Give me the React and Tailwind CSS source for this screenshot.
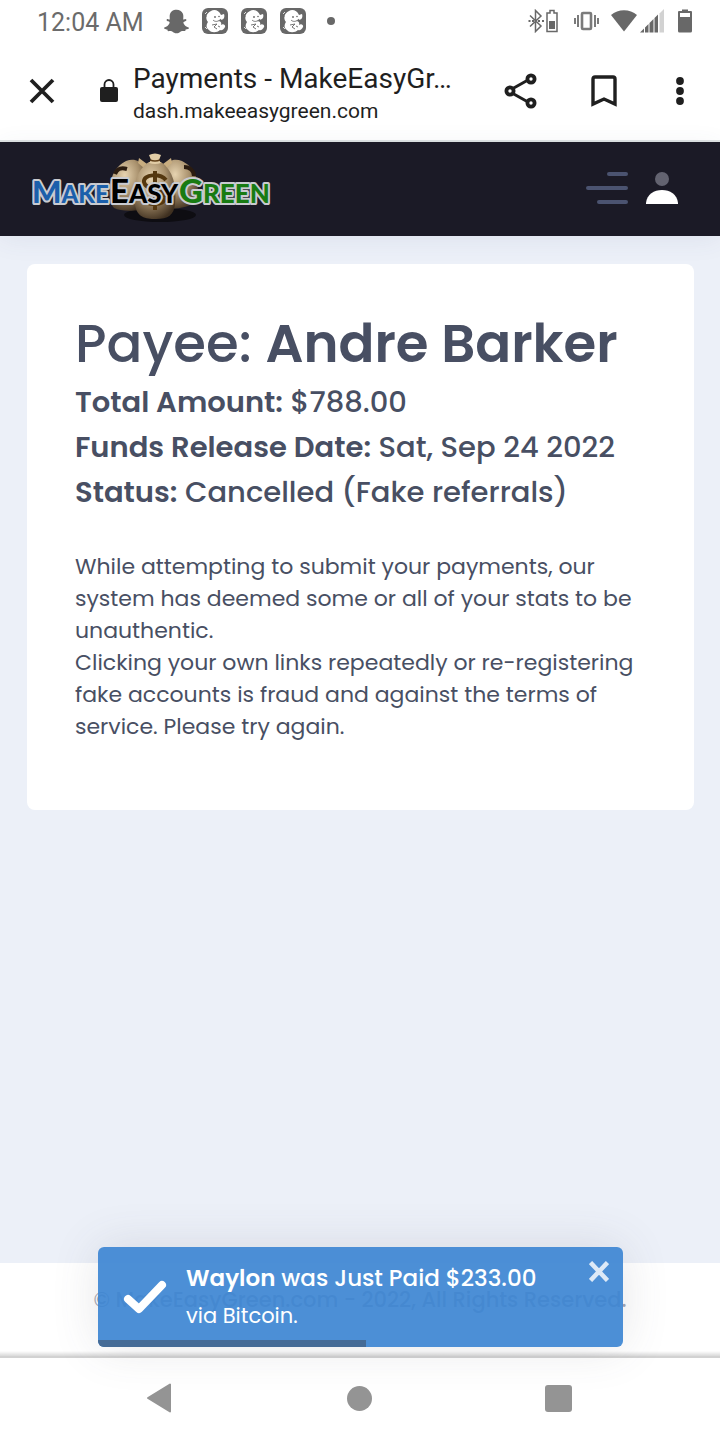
import { FaSnapchatGhost } from 'react-icons/fa'

const StickerIcon = () => (
  <svg width="26" height="26" viewBox="0 0 26 26" aria-hidden="true">
    <rect width="26" height="26" rx="6" fill="#686868" />
    <path
      d="M9 3c3-2 8-1 10 4l3-1c1 3 0 6-4 6l-2 1c2 0 4 1 3 4 2-2 5 0 4 2s-3 4-5 3c-3 3-9 3-11 0-3-2-3-5-1-8-3-3-2-9 3-11z"
      fill="#fff"
    />
    <path
      d="M4 8l-1 3M5 14l-2 2M11 12c2 2 5 2 8-1M10 17l5-1-3 3 3 2M16 18l2 1"
      fill="none"
      stroke="#686868"
      strokeWidth="0.9"
    />
    <circle cx="13" cy="9" r="0.9" fill="#686868" />
    <circle cx="17" cy="8.500" r="0.8" fill="#686868" />
    <path d="M3 6l2-2M3 19l2 2" stroke="#fff" strokeWidth="0.8" />
  </svg>
)

const BluetoothBatteryIcon = () => (
  <svg width="30" height="24" viewBox="0 0 30 24" fill="none" stroke="#686868" aria-hidden="true">
    <path d="M2 6.500l11 10.500-5.500 5.500V1.500L13 7 2 17.500" strokeWidth="1.500" />
    <path d="M0.500 12h2M4 12h2M10 12h2M14 12h2" strokeWidth="1.800" />
    <path d="M19 4h3V1.500h4V4h3v18.500H19z" strokeWidth="1.500" />
    <path d="M21 12h6v8h-6z" fill="#686868" stroke="none" />
  </svg>
)

const VibrateIcon = () => (
  <svg width="25" height="20" viewBox="0 0 25 20" fill="none" stroke="#7b7b7b" aria-hidden="true">
    <rect x="8" y="2" width="9" height="16" rx="1" strokeWidth="2.600" />
    <path d="M1 7v6M4 4v12M21 4v12M24 7v6" strokeWidth="2" />
  </svg>
)

const WifiIcon = () => (
  <svg width="26" height="22" viewBox="0 0 26 22" aria-hidden="true">
    <path d="M0 5C7-1.500 19-1.500 26 5L13 21.500z" fill="#686868" />
  </svg>
)

const SignalIcon = () => (
  <svg width="24" height="24" viewBox="0 0 24 24" fill="#686868" aria-hidden="true">
    <path d="M0 23.500L4 19.500v4zM5 18.500l3.500-3.500v8.500H5zM9.500 14l4-4v13.500h-4zM14.500 9L18 5.500v18h-3.500z" />
    <path d="M19.500 4.500L24 0v23.500h-4.500z" fill="#d2d2d2" />
  </svg>
)

const BatteryIcon = () => (
  <svg width="14" height="24" viewBox="0 0 14 24" aria-hidden="true">
    <path d="M4 2V.5h6V2h3q1 0 1 1v19q0 1.500-1.500 1.500h-11Q0 23.500 0 22V3q0-1 1-1z" fill="#686868" />
    <path d="M2 4h10v4H2z" fill="#fff" />
  </svg>
)

const CloseIcon = () => (
  <svg width="26" height="26" viewBox="0 0 26 26" stroke="#1f1f1f" strokeWidth="3.800" aria-hidden="true">
    <path d="M2 2l22 22M24 2L2 24" />
  </svg>
)

const LockIcon = () => (
  <svg width="18" height="24" viewBox="0 0 18 24" aria-hidden="true">
    <rect y="8" width="18" height="15" rx="2" fill="#1f1f1f" />
    <path d="M4.500 9V5.500a4.500 4.500 0 019 0V9" fill="none" stroke="#1f1f1f" strokeWidth="1.800" />
  </svg>
)

const ShareIcon = () => (
  <svg width="34" height="36" viewBox="0 0 34 36" fill="none" stroke="#1f1f1f" strokeWidth="3.800" aria-hidden="true">
    <path d="M8 16l16-9M8 20l16 9" strokeWidth="3" />
    <circle cx="6" cy="18" r="3.600" fill="#fff" />
    <circle cx="27" cy="6" r="3.600" fill="#fff" />
    <circle cx="27" cy="30" r="3.600" fill="#fff" />
  </svg>
)

const BookmarkIcon = () => (
  <svg width="26" height="32" viewBox="0 0 26 32" fill="none" stroke="#1f1f1f" strokeWidth="3.400" aria-hidden="true">
    <path d="M2 29V4q0-2 2-2h18q2 0 2 2v25l-11-5z" />
  </svg>
)

const MoreIcon = () => (
  <svg width="8" height="28" viewBox="0 0 8 28" fill="#1f1f1f" aria-hidden="true">
    <circle cx="4" cy="4" r="3.900" />
    <circle cx="4" cy="14" r="3.900" />
    <circle cx="4" cy="24" r="3.900" />
  </svg>
)

const StatusBar = () => (
  <div className="flex h-[42px] items-center justify-between pr-7 pl-[37px]">
    <div className="flex items-center">
      <span className="pt-1 text-[25px] leading-8 text-[#6b6b6b]">12:04 AM</span>
      <div className="ml-5 flex items-center gap-[13px]">
        <FaSnapchatGhost size={25} color="#686868" />
        <StickerIcon />
        <StickerIcon />
        <StickerIcon />
        <span className="ml-2 size-2 rounded-full bg-[#686868]" />
      </div>
    </div>
    <div className="flex items-center">
      <BluetoothBatteryIcon />
      <div className="ml-4 flex items-center">
        <VibrateIcon />
      </div>
      <div className="ml-3 flex items-center gap-[3px]">
        <WifiIcon />
        <SignalIcon />
      </div>
      <div className="ml-[14px]">
        <BatteryIcon />
      </div>
    </div>
  </div>
)

const BrowserBar = () => (
  <div className="flex h-[100px] items-center border-b-2 border-[#dfe3e3] pr-9 pl-[29px] text-[#1f1f1f]">
    <button type="button" aria-label="Close tab">
      <CloseIcon />
    </button>
    <div className="ml-[45px]">
      <LockIcon />
    </div>
    <div className="ml-[15px] min-w-0 flex-1 pt-2">
      <p className="text-[28px] leading-8 whitespace-nowrap">Payments - MakeEasyGr…</p>
      <p className="text-[21px] leading-8">dash.makeeasygreen.com</p>
    </div>
    <div className="flex items-center">
      <button type="button" aria-label="Share">
        <ShareIcon />
      </button>
      <button type="button" aria-label="Bookmark" className="ml-[53px]">
        <BookmarkIcon />
      </button>
      <button type="button" aria-label="More options" className="ml-[59px]">
        <MoreIcon />
      </button>
    </div>
  </div>
)

const Logo = () => (
  <svg width="242" height="76" viewBox="0 0 242 76" role="img" aria-label="MakeEasyGreen">
    <defs>
      <radialGradient id="bag" cx="0.4" cy="0.3" r="0.75">
        <stop offset="0" stopColor="#e6d3b0" />
        <stop offset="0.5" stopColor="#a8906c" />
        <stop offset="1" stopColor="#3f3020" />
      </radialGradient>
    </defs>
    <ellipse cx="128" cy="64" rx="36" ry="7" fill="#0e0d12" />
    <path d="M94 10c8-3 14 0 18 5l4 40c-8 6-26 6-34 2-8-8-7-38 12-47z" fill="url(#bag)" />
    <path d="M150 10c-8-3-14 0-18 5l-4 40c8 4 24 3 32-2 9-8 9-34-10-43z" fill="url(#bag)" />
    <path d="M107 7l8 6-3 4-6-5zM139 7l-8 6 3 4 6-5z" fill="#c8ad80" />
    <path d="M83 23c2-5 5-7 12-5M152 16c6 0 10 4 10 9" fill="none" stroke="#2b1c10" strokeWidth="4" />
    <path d="M117 11c-13 8-17 25-14 43 2 12 10 14 21 14 12 0 18-4 19-15 2-18-2-34-14-42z" fill="url(#bag)" />
    <path d="M117 4q6-3 12 0l-2 5 2 3q-6 2-12 0l2-3z" fill="#e2cda6" />
    <path d="M118 9q5 2 10 0" fill="none" stroke="#5d3d17" strokeWidth="1.500" />
    <path
      d="M134 29c-6-7-23-6-22 2 1 9 22 6 21 16-1 8-17 8-22 1M123 20v39"
      fill="none"
      stroke="#54370f"
      strokeWidth="4"
    />
    <g
      fontFamily="Lato, sans-serif"
      fontWeight="900"
      stroke="#c9cbd0"
      strokeWidth="4"
      strokeLinejoin="round"
      paintOrder="stroke"
    >
      <text x="0" y="52" fontSize="31" fill="#1b5fab">
        M<tspan fontSize="24">AKE</tspan>
      </text>
      <text x="147" y="52" fontSize="33" fill="#187b12">
        G<tspan fontSize="26">REEN</tspan>
      </text>
      <text x="78" y="52" fontSize="33" fill="#000">
        E<tspan fontSize="26">ASY</tspan>
      </text>
    </g>
  </svg>
)

const Header = () => (
  <header className="flex h-[94px] items-center justify-between bg-[#1b1a26] pr-[42px] pl-8 shadow-[0_4px_24px_rgba(70,80,110,0.08)]">
    <a href="/">
      <Logo />
    </a>
    <div className="flex items-center gap-[18px] pb-0.5">
      <button type="button" aria-label="Menu" className="flex w-[42px] flex-col items-end gap-[10px]">
        <span className="h-1 w-[21px] rounded-full bg-[#4b5370]" />
        <span className="h-1 w-[42px] rounded-full bg-[#4b5370]" />
        <span className="h-1 w-[31px] rounded-full bg-[#4b5370]" />
      </button>
      <button type="button" aria-label="Account">
        <svg width="32" height="32" viewBox="0 0 32 32" aria-hidden="true">
          <circle cx="16" cy="7" r="7" fill="#636370" />
          <path d="M0 32v-1c1-9 8-13 16-13s15 4 16 13v1z" fill="#fff" />
        </svg>
      </button>
    </div>
  </header>
)

const details = [
  { label: 'Total Amount:', value: '$788.00' },
  { label: 'Funds Release Date:', value: 'Sat, Sep 24 2022' },
  { label: 'Status:', value: 'Cancelled (Fake referrals)' },
]

const PaymentCard = () => (
  <section className="rounded-lg bg-white px-12 pt-12 pb-[67px] text-[#484f63]">
    <h1 className="mb-1 text-[53px] leading-[64px] font-medium whitespace-nowrap">
      Payee: <strong className="font-semibold">Andre Barker</strong>
    </h1>
    {details.map(({ label, value }) => (
      <p key={label} className="text-[29px] leading-[45px] font-medium whitespace-nowrap">
        <strong className="font-semibold">{label}</strong> {value}
      </p>
    ))}
    <p className="mt-9 text-[22px] leading-8 whitespace-nowrap">
      While attempting to submit your payments, our
      <br />
      system has deemed some or all of your stats to be
      <br />
      unauthentic.
      <br />
      Clicking your own links repeatedly or re-registering
      <br />
      fake accounts is fraud and against the terms of
      <br />
      service. Please try again.
    </p>
  </section>
)

const Toast = () => (
  <div
    role="status"
    className="absolute right-[97px] bottom-[9px] left-[98px] flex h-[100px] overflow-hidden rounded-md bg-[#3d86d2]/92 text-white shadow-[0_0_48px_rgba(80,80,90,0.14)]"
  >
    <svg width="44" height="36" viewBox="0 0 44 36" className="mt-8 ml-[25px]" aria-hidden="true">
      <path d="M5 20l11 10L39 6" fill="none" stroke="#fff" strokeWidth="8" strokeLinecap="round" strokeLinejoin="round" />
    </svg>
    <div className="mt-3 ml-[19px] whitespace-nowrap">
      <p className="text-[23px] leading-[38px] font-medium">
        <strong className="font-semibold">Waylon</strong> was Just Paid $233.00
      </p>
      <p className="text-[21px] leading-[38px] font-normal">via Bitcoin.</p>
    </div>
    <button type="button" aria-label="Dismiss" className="mt-[14px] mr-[14px] ml-auto self-start">
      <svg width="20" height="21" viewBox="0 0 20 21" stroke="#dce9f7" strokeWidth="4.500" aria-hidden="true">
        <path d="M1.500 1.500l17 18M18.500 1.500l-17 18" />
      </svg>
    </button>
    <div className="absolute bottom-0 left-0 h-[7px] w-[51%] bg-[#456b96]" />
  </div>
)

const Footer = () => (
  <footer className="relative flex h-[95px] items-center justify-center border-b-2 border-[#d2d2d2] bg-white pb-5 text-[21px] font-medium text-[#a4a7b3]">
    <p className="whitespace-nowrap">© MakeEasyGreen.com - 2022, All Rights Reserved.</p>
    <div className="absolute inset-x-0 bottom-0 h-[5px] bg-linear-to-b from-transparent to-black/15" />
    <Toast />
  </footer>
)

const SystemNav = () => (
  <nav className="grid h-[82px] grid-cols-[1fr_auto_1fr] items-center bg-white pr-[148px] pb-0.5 pl-[146px]">
    <button type="button" aria-label="Back" className="justify-self-start">
      <svg width="26" height="30" viewBox="0 0 26 30" aria-hidden="true">
        <path d="M24 1.500v27L2 15z" fill="#949494" stroke="#949494" strokeWidth="2" strokeLinejoin="round" />
      </svg>
    </button>
    <button type="button" aria-label="Home" className="size-[25px] rounded-full bg-[#949494]" />
    <button type="button" aria-label="Recent apps" className="size-[27px] justify-self-end rounded-[3px] bg-[#949494]" />
  </nav>
)

const App = () => {
  return (
    <div className="flex min-h-screen flex-col overflow-hidden bg-white font-[Roboto,sans-serif]">
      <StatusBar />
      <BrowserBar />
      <div className="flex flex-1 flex-col bg-[#ecf0f8] font-[Poppins,Inter,sans-serif]">
        <Header />
        <main className="flex-1 py-7 pr-[26px] pl-[27px]">
          <PaymentCard />
        </main>
        <Footer />
      </div>
      <SystemNav />
    </div>
  )
}

export default App
